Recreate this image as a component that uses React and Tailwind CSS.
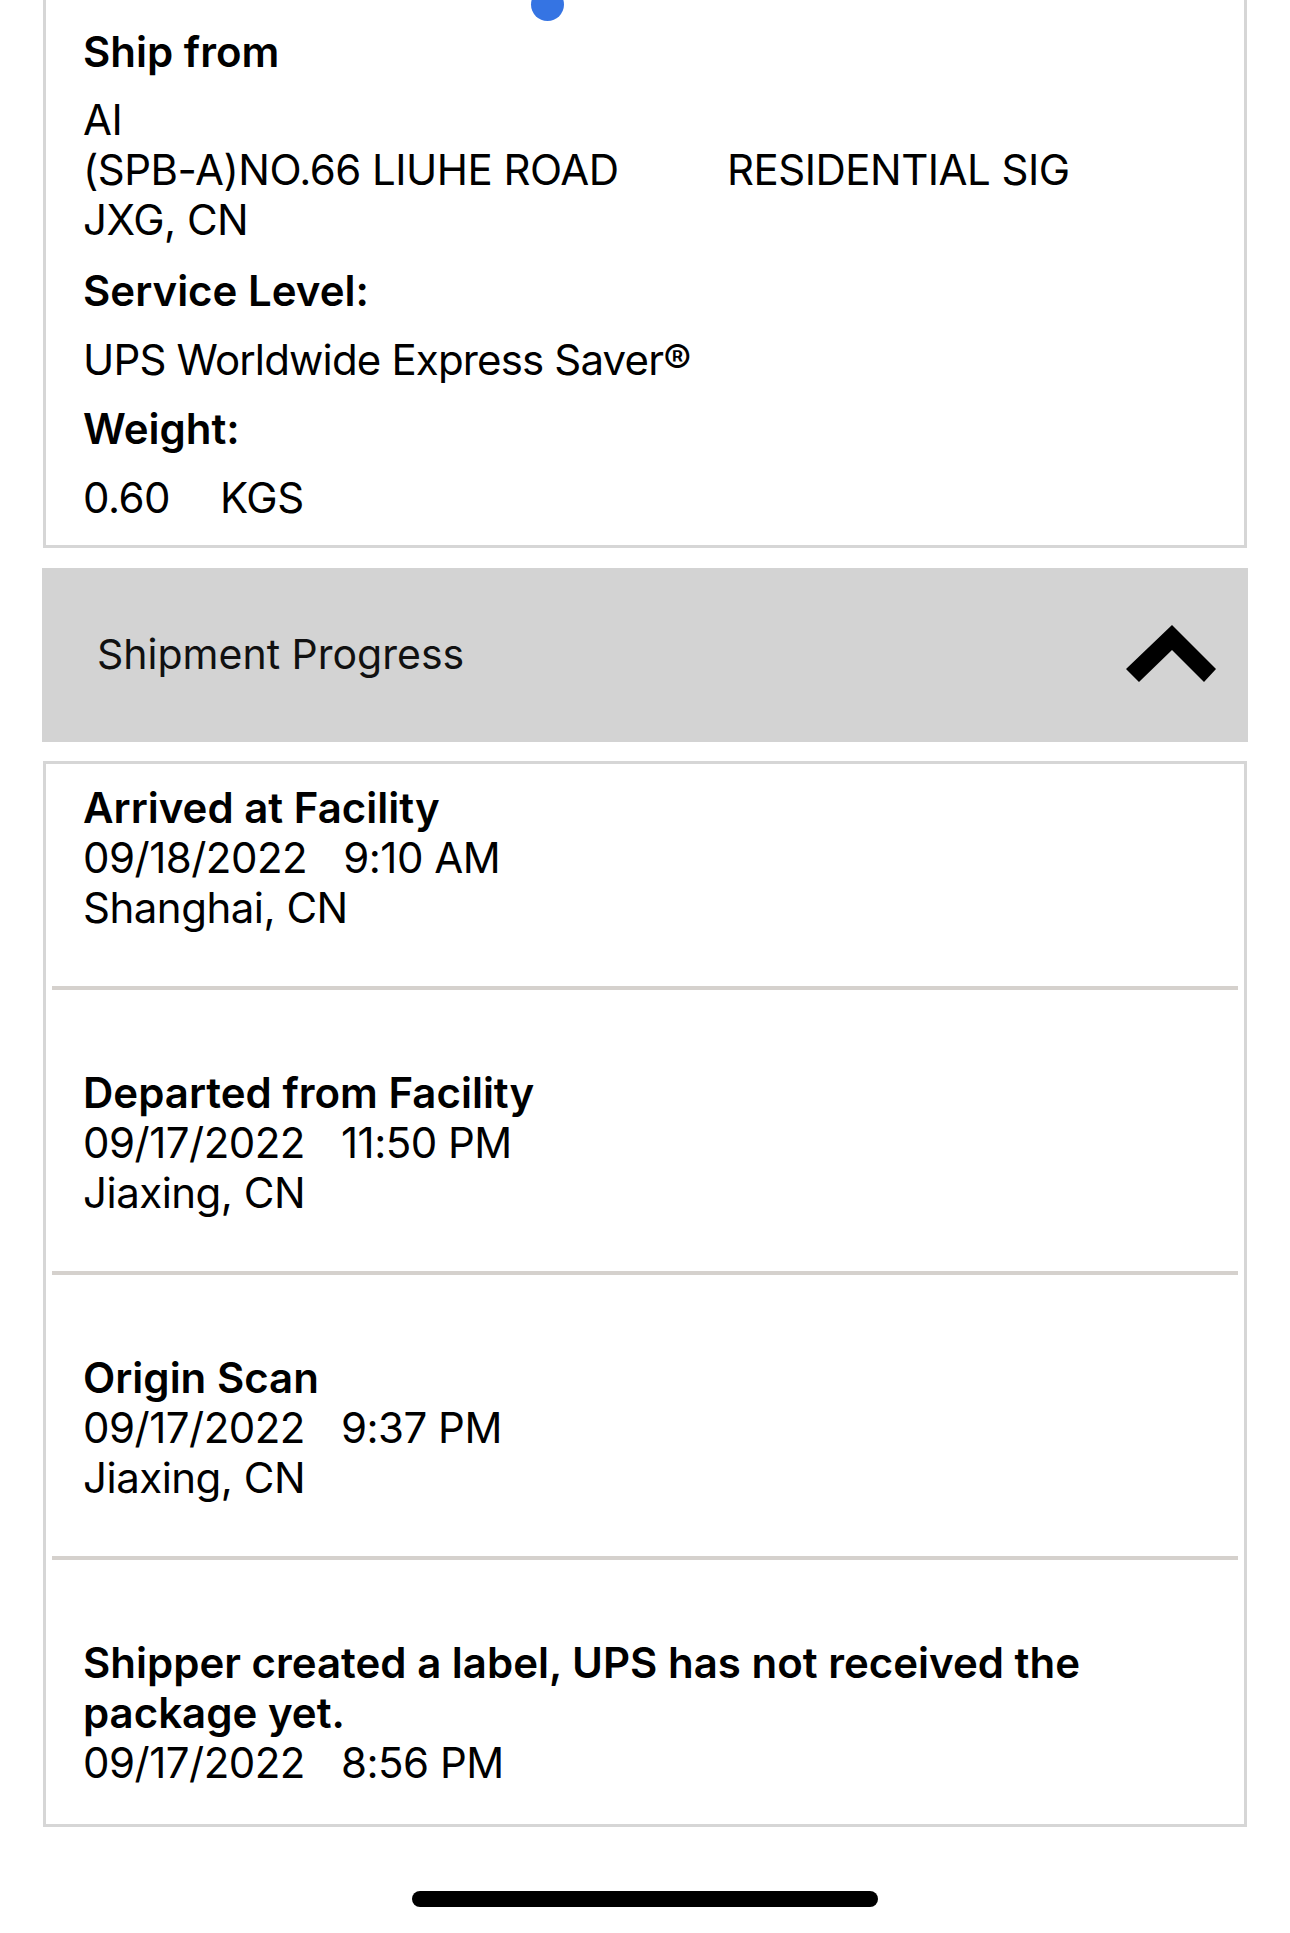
import React from 'react';

const events = [
  { title: 'Arrived at Facility', date: '09/18/2022', time: '9:10 AM', place: 'Shanghai, CN' },
  { title: 'Departed from Facility', date: '09/17/2022', time: '11:50 PM', place: 'Jiaxing, CN' },
  { title: 'Origin Scan', date: '09/17/2022', time: '9:37 PM', place: 'Jiaxing, CN' },
  { title: 'Shipper created a label, UPS has not received the package yet.', date: '09/17/2022', time: '8:56 PM' },
];

function ChevronUp() {
  return (
    <svg width="94" height="60" viewBox="0 0 94 60" className="block">
      <polygon points="46,0 90,44 78,57 46,25 13,57 0,44" fill="#000" />
    </svg>
  );
}

function EventRow({ ev, first, last }) {
  return (
    <div className={`${first ? 'pt-[19px]' : 'pt-[78px]'} ${last ? 'pb-[36px]' : 'pb-[53px]'} pl-[37px] pr-[30px]`}>
      <div className="font-semibold tracking-normal leading-[50px] max-w-[1060px]">{ev.title}</div>
      <div className="leading-[50px] flex">
        <span>{ev.date}</span>
        <span className="ml-[36px]">{ev.time}</span>
      </div>
      {ev.place && <div className="leading-[50px]">{ev.place}</div>}
    </div>
  );
}

export default function App() {
  return (
    <div
      className="relative w-[1290px] h-[1933px] bg-white overflow-hidden text-black text-[42px] tracking-[-0.012em]"
      style={{ fontFamily: 'Inter, "Noto Sans", sans-serif' }}
    >
      <div className="absolute left-[531px] -top-[12px] w-[33px] h-[33px] rounded-full bg-[#3574e3]" />

      <div className="px-[43px]">
        <div className="border-[3px] border-t-0 border-[#d6d6d6] pl-[37px] pt-[27px] pb-[22px]">
          <div className="font-semibold tracking-normal leading-[50px]">Ship from</div>
          <div className="mt-[18px] leading-[50px]">
            <div>AI</div>
            <div className="flex">
              <span className="w-[644px] shrink-0">(SPB-A)NO.66 LIUHE ROAD</span>
              <span>RESIDENTIAL SIG</span>
            </div>
            <div>JXG, CN</div>
          </div>
          <div className="mt-[21px] font-semibold tracking-normal leading-[50px]">Service Level:</div>
          <div className="mt-[19px] leading-[50px] tracking-[-0.02em]">UPS Worldwide Express Saver®</div>
          <div className="mt-[19px] font-semibold tracking-normal leading-[50px]">Weight:</div>
          <div className="mt-[19px] leading-[50px] flex">
            <span>0.60</span>
            <span className="ml-[50px]">KGS</span>
          </div>
        </div>

        <div className="mt-[20px] -mx-px h-[174px] bg-[#d3d3d3] flex items-center justify-between pl-[55px] pr-[28px]">
          <span className="text-[41px] tracking-normal text-[#111]">Shipment Progress</span>
          <ChevronUp />
        </div>

        <div className="mt-[19px] border-[3px] border-[#d6d6d6]">
          {events.map((ev, i) => (
            <div key={i}>
              {i > 0 && <div className="mx-[6px] h-[4px] bg-[#d5d1cd]" />}
              <EventRow ev={ev} first={i === 0} last={i === events.length - 1} />
            </div>
          ))}
        </div>
      </div>

      <div className="flex justify-center mt-[64px]">
        <div className="w-[466px] h-[16px] rounded-full bg-black" />
      </div>
    </div>
  );
}
